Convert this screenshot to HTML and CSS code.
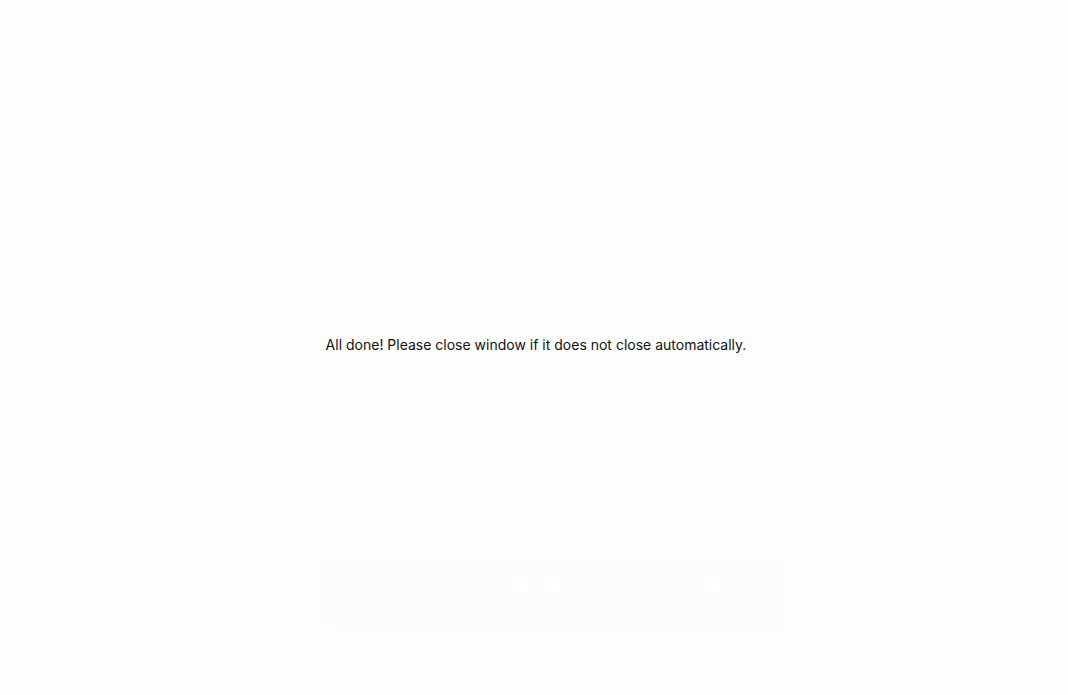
FILE: index.html
```html
<!DOCTYPE html>
<html lang="en">
    <head>
        <meta charset="UTF-8">
        <link rel="stylesheet" href="styles.css">
    </head>
    <body>
        <div class="message">
            <p>All done! Please close window if it does not close automatically.</p>
        </div>
        <!-- faint toolbar overlay near the bottom -->
        <div class="overlay">
            <div class="overlay-bar">
                <span class="dot dot-a"></span>
                <span class="dot dot-b"></span>
                <span class="dot dot-c"></span>
            </div>
            <div class="overlay-foot"></div>
        </div>
    </body>
</html>
```
FILE: styles.css
```css
html {
    background-color: #fefefe;
}

body {
    margin: 0;
    height: 695px;
    font-family: "Inter", "Liberation Sans", sans-serif;
    color: #111111;
    position: relative;
}

.message {
    height: 690px;
    padding-left: 4px;
    display: flex;
    justify-content: center;
    align-items: center;
}

.message p {
    margin: 0;
    font-size: 14px;
    line-height: 20px;
}

.overlay {
    position: absolute;
    left: 321px;
    top: 560px;
    width: 464px;
}

.overlay-bar {
    height: 63px;
    background-color: #fcfcfc;
    position: relative;
}

.overlay-foot {
    margin-left: 16px;
    height: 10px;
    background-color: #fcfcfc;
}

.dot {
    position: absolute;
    top: 17px;
    width: 16px;
    height: 16px;
    background-color: #ffffff;
}

.dot-a {
    left: 192px;
}

.dot-b {
    left: 224px;
}

.dot-c {
    left: 384px;
}
```
